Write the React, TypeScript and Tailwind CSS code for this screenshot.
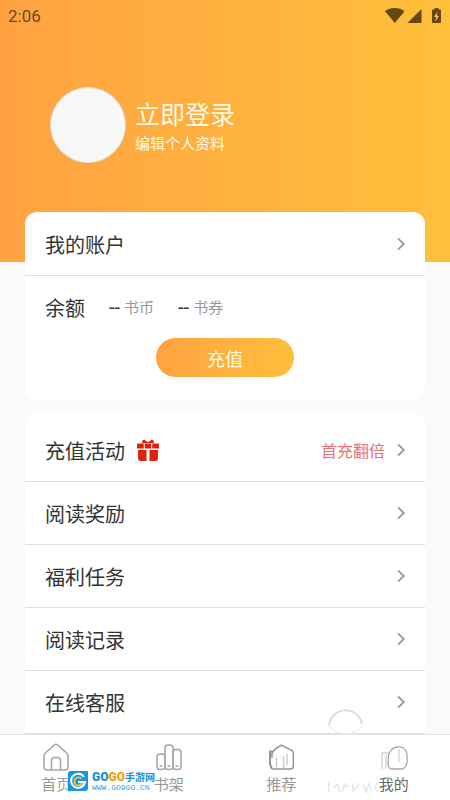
import React from "react";

const cjk = "font-['Noto_Sans_CJK_SC',sans-serif]";

function Chevron() {
  return (
    <svg className="h-4 w-4 shrink-0" viewBox="0 0 16 16" fill="none" stroke="#999" strokeWidth="1.8" aria-hidden="true">
      <path d="M5 2.3 10.8 8 5 13.7" />
    </svg>
  );
}

function Gift() {
  return (
    <svg className="ml-[11px] h-6 w-6" viewBox="0 0 24 24" fill="#db2110" aria-hidden="true">
      <path d="M6.500 2.500 8 1.500 11 3.800h2L16 1.500l1.500 1 .5 2.500H6Z" />
      <path d="M2 5.500h5.800v5H1v-4a1 1 0 0 1 1-1ZM16.200 5.500H22a1 1 0 0 1 1 1v4h-6.800ZM8.800 5.500h6.400v5H8.800Z" />
      <path d="M2 12h8.500v11H4.200A2 2 0 0 1 2.200 21ZM13.500 12H22l-.2 9a2 2 0 0 1-2 2h-6.300Z" />
      <path d="M9 1.500l3 2 3-2" fill="#fff" />
    </svg>
  );
}

function StatusBar() {
  return (
    <div className="flex h-8 items-center justify-between px-2 text-[#6b4a1c]">
      <span className="font-['Roboto',sans-serif] text-[17px] leading-8">2:06</span>
      <svg className="h-4 w-[58px]" viewBox="0 0 58 16" fill="#664711" aria-hidden="true">
        <path d="M1 3.2C6.5-1 15-1 20.500 3.200L10.800 15Z" />
        <path d="M37.500 1v14H23.500Z" />
        <path d="M50.500 0h4v1.600h1.500a1 1 0 0 1 1 1V14a1 1 0 0 1-1 1h-7a1 1 0 0 1-1-1V2.600a1 1 0 0 1 1-1h1.500Z" />
        <path d="M53.500 3.500 50 9h2.200l-.8 4.500L55 7.800h-2.300Z" fill="#ffc95e" />
      </svg>
    </div>
  );
}

function Row({ label, gift, note }: { label: string; gift?: boolean; note?: string }) {
  return (
    <a href="#" className="flex h-[63px] items-center border-b border-[#dedede] pr-4 pl-5 text-xl text-[#333]">
      <span className="pt-[2px]">{label}</span>
      {gift && <Gift />}
      <span className="mr-2 ml-auto text-base text-[#ec7070]">{note}</span>
      <Chevron />
    </a>
  );
}

function HomeIcon() {
  return (
    <svg className="h-7 w-7" viewBox="0 0 28 28" fill="none" stroke="#a5a5a5" strokeWidth="1.500" aria-hidden="true">
      <path d="M12.200 2.100a2.800 2.800 0 0 1 3.600 0l8.600 7.700c1 1 1.600 2.200 1.600 3.600V24a3 3 0 0 1-3 3H5a3 3 0 0 1-3-3V13.400c0-1.400.6-2.600 1.600-3.600Z" />
      <path d="M9.500 27V17.500a3 3 0 0 1 3-3h3a3 3 0 0 1 3 3V27" />
    </svg>
  );
}

function ShelfIcon() {
  return (
    <svg className="h-7 w-7" viewBox="0 0 28 28" fill="none" stroke="#a5a5a5" strokeWidth="1.500" aria-hidden="true">
      <rect x="2" y="11" width="8" height="15.500" rx="3" />
      <rect x="10" y="2" width="8" height="24.500" rx="3" />
      <rect x="18" y="6.500" width="8" height="20" rx="3" />
      <path d="M4.500 23h3M12.500 23h3M20.500 23h3" />
    </svg>
  );
}

function RecommendIcon() {
  return (
    <svg className="h-7 w-7" viewBox="0 0 28 28" fill="none" stroke="#999399" strokeWidth="1.500" aria-hidden="true">
      <path d="M5 15V10.500C7 6 11 4 14.500 2.200L25 7.500l1.300 2V23q0 3-3 3H6q-2 0-2-3" />
      <path d="M2 8.500h4M3 8v13l2 5" strokeWidth="2" />
      <path d="M9.500 25V14M16.500 25V13M20 22V11" stroke="#cfcbcf" />
    </svg>
  );
}

function ProfileIcon() {
  return (
    <svg className="h-7 w-7" viewBox="0 0 28 28" fill="none" stroke="#aaa" strokeWidth="1.300" aria-hidden="true">
      <path d="M11 26C8 25 8 22 8 19c1-4-1-7 2-10 3-6 12-7 16-1 2 4 1 8 1 12-1 4-3 6-6 6Z" />
      <path d="M8 10H2v16M6 12v14M19 6v13" stroke="#d2d2d2" />
    </svg>
  );
}

function Watermark() {
  return (
    <div className="pointer-events-none absolute bottom-2 left-[68px] flex items-center gap-1">
      <svg className="h-5 w-5" viewBox="0 0 20 20" aria-hidden="true">
        <path d="M3 0h17v17a3 3 0 0 1-3 3H0V3a3 3 0 0 1 3-3Z" fill="#1596df" />
        <path d="M16 6A7 7 0 1 0 17 11H10" fill="none" stroke="#fff" strokeWidth="2" />
        <path d="M13.500 8A4 4 0 1 0 14 12" fill="none" stroke="#ffc13b" strokeWidth="1.800" />
      </svg>
      <div className="flex flex-col">
        <span className="flex items-center text-[10px] leading-[14px] font-bold text-[#1592dc]">
          <span className="font-['Roboto',sans-serif] text-xs leading-[14px] font-black">GO</span>
          <span className="font-['Roboto',sans-serif] text-xs leading-[14px] font-black text-[#ff9d0a]">GO</span>
          <span>手游网</span>
        </span>
        <span className="font-['Liberation_Mono',monospace] text-[8px] leading-[8px] text-[#39a4dd]">WWW.GO9GO.CN</span>
      </div>
    </div>
  );
}

function GhostMark() {
  return (
    <svg className="pointer-events-none absolute right-[60px] bottom-0 h-[96px] w-[64px]" viewBox="0 0 64 96" fill="none" aria-hidden="true">
      <path d="M3 22C5 2 32 1 36 20" stroke="#dedcd8" strokeWidth="2" />
      <path d="M4 22c4 10 28 10 32 0" stroke="#f0f0f0" strokeWidth="1.500" />
      <path d="M3 78v10M8 84l3-4 3 8M17 82h6M19 79l-3 9M27 79v8l6-7M37 80l3 8 3-8 2 7M52 78l-3 5 3 5" stroke="#e6e6ea" strokeWidth="1.500" />
    </svg>
  );
}

export default function App() {
  return (
    <div className={`relative min-h-screen bg-[#fafafa] ${cjk}`}>
      <header className="h-[262px] bg-linear-to-r from-[#ffa242] to-[#ffbf3a]">
        <StatusBar />
        <a href="#" className="mt-[55px] ml-[50px] flex items-center text-[#fffbe6]">
          <span className="h-[76px] w-[76px] rounded-full border border-[#ddd] bg-[#f8f8f8]" />
          <span className="ml-[9px] flex flex-col">
            <span className="text-[25px] leading-9">立即登录</span>
            <span className="text-[15px] leading-6">编辑个人资料</span>
          </span>
        </a>
      </header>

      <main className="-mt-[50px] flex flex-col gap-3 px-[25px]">
        <section className="rounded-xl bg-white pt-px pb-6">
          <Row label="我的账户" />
          <div className="flex h-[62px] items-center pl-5 text-[#333]">
            <span className="pt-[2px] text-xl">余额</span>
            <span className="ml-6 font-['Roboto',sans-serif] text-xl">--</span>
            <span className="ml-1 text-[15px] text-[#999]">书币</span>
            <span className="ml-6 font-['Roboto',sans-serif] text-xl">--</span>
            <span className="ml-1 text-[15px] text-[#999]">书券</span>
          </div>
          <button className="mx-auto block h-[39px] w-[138px] rounded-full bg-linear-to-r from-[#ffa242] to-[#ffbf3a] text-lg text-[#fffbe6]">充值</button>
        </section>
        <section className="rounded-t-xl bg-white pt-[6px]">
          <Row label="充值活动" gift note="首充翻倍" />
          <Row label="阅读奖励" />
          <Row label="福利任务" />
          <Row label="阅读记录" />
          <Row label="在线客服" />
        </section>
      </main>

      <nav className="absolute inset-x-0 bottom-0 grid h-[66px] grid-cols-4 border-t border-[#e4e4e4] bg-white pt-2 text-[15px] leading-[26px] text-[#999]">
        <a href="#" className="flex flex-col items-center"><HomeIcon />首页</a>
        <a href="#" className="flex flex-col items-center"><ShelfIcon />书架</a>
        <a href="#" className="flex flex-col items-center"><RecommendIcon />推荐</a>
        <a href="#" className="flex flex-col items-center text-[#666]"><ProfileIcon />我的</a>
        <Watermark />
        <GhostMark />
      </nav>
    </div>
  );
}
